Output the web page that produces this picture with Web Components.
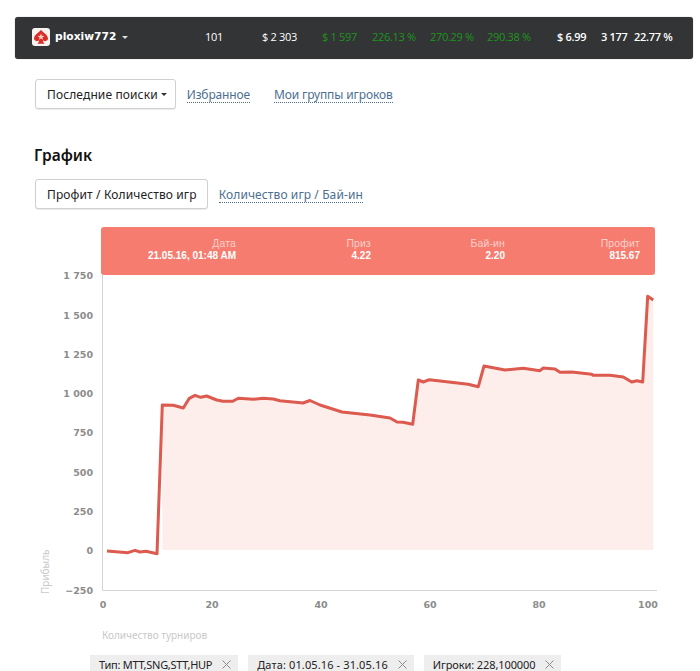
<!DOCTYPE html>
<html lang="ru">
<head>
<meta charset="utf-8">
<title>График</title>
<style>
    html, body { margin: 0; background: #fff; }
    body { height: 671px; overflow: hidden; font-family: "Noto Sans", sans-serif; color: #222; }
</style>
</head>
<body>
<app-page></app-page>

<script>
const LINE = [[107,551],[128,552.7],[135,550.3],[140,552],[146,551.3],[157,553.7],[162.3,405],[173.3,405.3],[183.3,408],[189.3,398.3],[195,395.3],[200.7,397.3],[206.7,396],[216.7,400],[223,401.3],[232.7,401.3],[238.3,398.3],[253.3,399.3],[263.3,398.3],[273.3,399],[280,400.7],[303,403],[310,400.5],[320,405],[342,412],[370,415],[390,418],[397,422],[403,422.3],[412.7,424.3],[418.3,380],[423.3,382],[429.3,379.7],[468.3,384.3],[478.3,386.7],[484,366],[505,370],[523.3,368.3],[540,370.7],[543.3,368],[555,369],[560,372.3],[571.7,372],[591.7,374.3],[593,375.3],[610,375.3],[623.3,377],[631.7,382],[636.7,380.7],[642.7,382],[647.7,296.3],[653.3,300]];

class UserBar extends HTMLElement {
    constructor() {
        super();
        this.attachShadow({mode: 'open'});
    }
    connectedCallback() {
        const stats = [['101',''],['$ 2 303',''],['$ 1 597','up'],['226.13 %','up'],['270.29 %','up'],['290.38 %','up'],['$ 6.99','b'],['3 177','b'],['22.77 %','b']];
        this.shadowRoot.innerHTML = `
        <style>
            :host{display:grid;grid-template-columns:190px 57px 60px 50px 58px 57px 70px 44px 33px 1fr;align-items:center;height:42px;padding-bottom:3px;box-sizing:border-box;margin:17px 7px 0 15px;background:#333435;border-radius:3px;color:#fff;font:11px "Open Sans",sans-serif;box-shadow:0 0 1px #888;}
            .user{display:flex;align-items:center;gap:5px;padding-left:17px;font:bold 10.700px "DejaVu Sans",sans-serif;}
            .logo{width:18px;height:18px;display:block;margin-top:1px;}
            .caret{width:0;height:0;border:3px solid transparent;border-top-color:#ddd;border-bottom:0;margin-left:1px;margin-top:1px;}
            span{white-space:nowrap;letter-spacing:-.3px;}
            .up{color:#1c961c;}
            .b{font-weight:600;}
        </style>
        <div class="user">
            <svg class="logo" viewBox="0 0 18 18"><rect width="18" height="18" rx="3" fill="#f7f4f0"/><path d="M9 1.800C10.700 4.600 16 6.800 16 10.600c0 2.400-3 3.400-5.200 1.700.2 1.500.8 2.500 1.800 3.500H5.400c1-1 1.600-2 1.800-3.500C5 14 2 13 2 10.600 2 6.800 7.300 4.600 9 1.800z" fill="#d92d26"/><path d="M9 5.400l.9 2.400 2.500.1-2 1.500.7 2.400L9 10.400l-2.100 1.400.7-2.400-2-1.500 2.500-.1z" fill="#f6cfc6"/></svg>
            <span style="letter-spacing:0">ploxiw772</span>
            <i class="caret"></i>
        </div>
        ${stats.map(s => `<span class="${s[1]}">${s[0]}</span>`).join('')}
        `;
    }
}
customElements.define('user-bar', UserBar);

class PillTab extends HTMLElement {
    constructor() {
        super();
        this.attachShadow({mode: 'open'}).innerHTML = `
        <style>
            :host{display:flex;align-items:center;height:30px;box-sizing:border-box;padding:0 10px 0 11px;background:#fff;border:1px solid #d0d0d0;border-radius:3px;box-shadow:0 1px 1px rgba(0,0,0,.08);color:#222;white-space:nowrap;letter-spacing:.12px;}
            .caret{display:none;width:0;height:0;border:3px solid transparent;border-top-color:#333;border-bottom:0;margin-left:3px;}
            :host([caret]){padding-right:8px;}
            :host([caret]) .caret{display:block;}
        </style>
        <slot></slot><i class="caret"></i>
        `;
    }
}
customElements.define('pill-tab', PillTab);

class DotLink extends HTMLElement {
    constructor() {
        super();
        this.attachShadow({mode: 'open'}).innerHTML = `
        <style>
            :host{display:block;color:#4d6f8f;border-bottom:1px dotted #4d6f8f;line-height:14px;white-space:nowrap;margin-top:2px;}
        </style>
        <slot></slot>
        `;
    }
}
customElements.define('dot-link', DotLink);

class TabRow extends HTMLElement {
    constructor() {
        super();
        this.attachShadow({mode: 'open'}).innerHTML = `
        <style>
            :host{display:flex;align-items:center;gap:11px;font:12px "Noto Sans",sans-serif;}
        </style>
        <slot></slot>
        `;
    }
}
customElements.define('tab-row', TabRow);

class ProfitChart extends HTMLElement {
    constructor() {
        super();
        this.attachShadow({mode: 'open'});
    }
    connectedCallback() {
        const top = 227;
        const pts = LINE.map(p => p[0] + ',' + (p[1] - top)).join(' ');
        const area = `162.300,${550 - top} ${LINE.slice(6).map(p => p[0] + ',' + (p[1] - top)).join(' ')} 653.300,${550 - top}`;
        const yTicks = [['1 750',275],['1 500',314.5],['1 250',354],['1 000',393],['750',432],['500',471.5],['250',511],['0',550],['−250',590]];
        const xTicks = [0,20,40,60,80,100];
        const tip = [['Дата','21.05.16, 01:48 AM'],['Приз','4.22'],['Бай-ин','2.20'],['Профит','815.67']];
        this.shadowRoot.innerHTML = `
        <style>
            :host{display:block;position:relative;height:418px;}
            svg{display:block;}
            text{font-family:"DejaVu Sans",sans-serif;}
            .tick{font-size:9.500px;font-weight:bold;fill:#8c8c8c;}
            .title{font:10px "Noto Sans",sans-serif;fill:#c9c9c9;}
            .tip{position:absolute;left:101px;top:0;width:554px;height:48px;background:#f67c70;border-radius:3px;display:grid;grid-template-columns:135px 135px 134px 135px;box-sizing:border-box;padding-top:11px;color:#fff;font:10px/12px "Liberation Sans",sans-serif;}
            .tip div{text-align:right;}
            .tip small{display:block;height:12px;font-size:10.400px;letter-spacing:.2px;color:#fbd0ca;}
            .tip b{display:block;height:12px;font-size:10px;}
        </style>
        <svg width="700" height="418" viewBox="0 0 700 418">
            <polygon points="${area}" fill="#fdeeeb"/>
            <path d="M102.500 48V363.500H657" fill="none" stroke="#d4d4d4"/>
            <polyline points="${pts}" fill="none" stroke="#dc5a4e" stroke-width="3" stroke-linejoin="round"/>
            ${yTicks.map(t => `<text class="tick" x="93" y="${t[1] - top + 4}" text-anchor="end">${t[0]}</text>`).join('')}
            ${xTicks.map(t => `<text class="tick" x="${103 + t * 5.45}" y="381" text-anchor="middle">${t}</text>`).join('')}
            <text class="title" transform="translate(49 367) rotate(-90)">Прибыль</text>
            <text class="title" x="102" y="412">Количество турниров</text>
        </svg>
        <div class="tip">
            ${tip.map(t => `<div><small>${t[0]}</small><b>${t[1]}</b></div>`).join('')}
        </div>
        `;
    }
}
customElements.define('profit-chart', ProfitChart);

class FilterChip extends HTMLElement {
    constructor() {
        super();
        this.attachShadow({mode: 'open'}).innerHTML = `
        <style>
            :host{display:flex;align-items:center;gap:10px;height:22px;box-sizing:border-box;padding:0 7px 4px 9px;background:#eeeeee;color:#222;font:11px "Noto Sans",sans-serif;white-space:nowrap;}
            svg{width:9px;height:9px;display:block;}
        </style>
        <slot></slot>
        <svg viewBox="0 0 9 9"><path d="M.5.500l8 8M8.500.500l-8 8" stroke="#8a8a8a" fill="none"/></svg>
        `;
    }
}
customElements.define('filter-chip', FilterChip);

class AppPage extends HTMLElement {
    constructor() {
        super();
        this.attachShadow({mode: 'open'}).innerHTML = `
        <style>
            :host{display:block;height:671px;overflow:hidden;}
            .search{margin:20px 0 0 35px;}
            h2{margin:35px 0 0 34px;font:600 15.500px/22px "Noto Sans",sans-serif;color:#111;}
            .modes{margin:13px 0 18px 35px;}
            .chips{display:flex;gap:10px;margin:10px 0 0 90px;}
        </style>
        <user-bar></user-bar>
        <tab-row class="search">
            <pill-tab caret>Последние поиски</pill-tab>
            <dot-link style="letter-spacing:-.15px">Избранное</dot-link>
            <dot-link style="letter-spacing:-.12px;margin-left:13px">Мои группы игроков</dot-link>
        </tab-row>
        <h2>График</h2>
        <tab-row class="modes">
            <pill-tab>Профит / Количество игр</pill-tab>
            <dot-link style="letter-spacing:.1px">Количество игр / Бай-ин</dot-link>
        </tab-row>
        <profit-chart></profit-chart>
        <div class="chips">
            <filter-chip style="letter-spacing:-.28px">Тип: MTT,SNG,STT,HUP</filter-chip>
            <filter-chip style="letter-spacing:.12px">Дата: 01.05.16 - 31.05.16</filter-chip>
            <filter-chip style="letter-spacing:-.1px">Игроки: 228,100000</filter-chip>
        </div>
        `;
    }
}
customElements.define('app-page', AppPage);
</script>
</body>
</html>
